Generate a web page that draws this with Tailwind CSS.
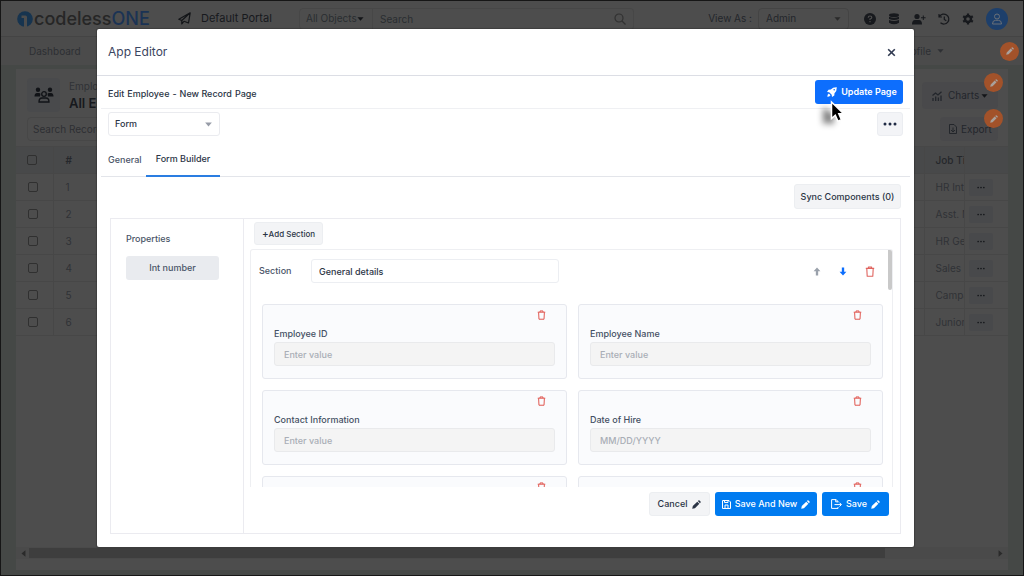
<!DOCTYPE html>
<html lang="en">
<head>
<meta charset="utf-8">
<meta name="viewport" content="width=device-width, initial-scale=1">
<title>App Editor</title>
<script src="https://cdn.jsdelivr.net/npm/@tailwindcss/browser@4"></script>
</head>
<body class="relative flex h-screen flex-col overflow-hidden border border-[#161616] bg-[#454846] font-['Inter',sans-serif] text-[10px] text-[#23262b]">

<!-- shared symbols -->
<svg class="hidden" aria-hidden="true">
  <symbol id="trash" viewBox="0 0 10 11"><path d="M.8 2.400h8.400M3.400 2.200V1h3.200v1.200M1.800 2.600l.4 7.600h5.600l.4-7.600" fill="none" stroke="currentColor" stroke-width="1.100" stroke-linejoin="round"/></symbol>
  <symbol id="pencil" viewBox="0 0 12 12"><path d="M.3 11.700l.8-3.600L7 2.200l2.800 2.800-5.900 5.900zM7.800 1.400l.8-.8q.7-.6 1.400 0l1.400 1.400q.6.7 0 1.400l-.8.8z" fill="currentColor"/></symbol>
  <symbol id="caret" viewBox="0 0 8 5"><path d="M.2.300h7.600L4 4.800z" fill="currentColor"/></symbol>
  <symbol id="arrow" viewBox="0 0 8 10"><path d="M4 .5L7.800 4.800H5.300V9.500H2.700V4.800H.2z" fill="currentColor"/></symbol>
  <symbol id="dots" viewBox="0 0 14 4"><circle cx="2" cy="2" r="1.500"/><circle cx="7" cy="2" r="1.500"/><circle cx="12" cy="2" r="1.500"/></symbol>
</svg>

<header class="flex h-9 shrink-0 items-center border-b border-[#444] bg-[#4d4d4d] pr-[15px] pl-4">
  <a href="#" class="flex w-[161px] items-center gap-px text-lg font-medium text-[#262626]">
    <svg class="h-4 w-4 shrink-0" viewBox="0 0 16 16"><circle cx="8" cy="8" r="7.800" fill="#17344f"/><path d="M4.500 4.500H8.500q1.500 0 1.500 1.500V16H7V7H4.500z" fill="#4d4d4d"/></svg>
    <span>codeless<span class="text-[#1b3354]">ONE</span></span>
  </a>
  <svg class="h-[13px] w-[13px]" viewBox="0 0 13 13" fill="none" stroke="#131518" stroke-width="1.200" stroke-linejoin="round"><path d="M12.200.8L.8 7.200l3 1.300L12.200.8 10.500 11 6 9.300M3.800 8.500V12l2-2.700"/></svg>
  <span class="ml-[10px] w-[98px] text-[11px] text-[#17191d]">Default Portal</span>
  <div class="relative w-[74px]">
    <select aria-label="Objects" class="h-[22px] w-full appearance-none rounded-l border border-[#474747] pl-[6px] text-[10px] text-[#2a2d31]"><option>All Objects</option></select>
    <svg class="absolute top-[9px] right-[9px] h-1 w-[7px] text-[#131518]"><use href="#caret"/></svg>
  </div>
  <div class="relative w-[261px]">
    <input aria-label="Search" placeholder="Search" class="h-[22px] w-full rounded-r border border-l-0 border-[#474747] pl-[7px] text-[10px] placeholder:text-[#2a2d31]">
    <svg class="absolute top-[5px] right-2 h-3 w-3" viewBox="0 0 12 12" fill="none" stroke="#313131" stroke-width="1.200"><circle cx="5" cy="5" r="4"/><path d="M8 8l3.500 3.500"/></svg>
  </div>
  <label for="view" class="mr-[6px] ml-auto text-[10px]">View As :</label>
  <div class="relative w-[91px]">
    <select id="view" class="h-[22px] w-full appearance-none rounded border border-[#444] pl-[7px] text-[10px]"><option>Admin</option></select>
    <svg class="absolute top-[9px] right-2 h-1 w-[7px] text-[#2a2a2a]"><use href="#caret"/></svg>
  </div>
  <nav class="ml-[15px] flex items-center gap-3 text-[#17191d]" aria-label="Tools">
    <button aria-label="Help"><svg class="h-3 w-3" viewBox="0 0 12 12"><circle cx="6" cy="6" r="6" fill="currentColor"/><path d="M4.200 4.700q0-1.700 1.800-1.700t1.800 1.500Q7.800 5.500 6 6v1M6 8v1.300" fill="none" stroke="#4d4d4d" stroke-width="1.200"/></svg></button>
    <button aria-label="Data"><svg class="h-3 w-3" viewBox="0 0 12 12" fill="currentColor"><ellipse cx="6" cy="2.200" rx="5" ry="1.900"/><path d="M1 3.700q5 2.200 10 0V6q-5 2.200-10 0zM1 7q5 2.200 10 0v2.800q-5 3-10 0z"/></svg></button>
    <button aria-label="Add user"><svg class="h-3 w-[14px]" viewBox="0 0 14 12" fill="currentColor"><circle cx="5" cy="3.500" r="2.600"/><path d="M0 11.500q0-4.500 3-4.500h4q3 0 3 4.500zM10.800 2.500h1v1.800h1.800v1h-1.800v1.800h-1V5.300H9v-1h1.800z"/></svg></button>
    <button aria-label="History"><svg class="h-3 w-3" viewBox="0 0 12 12" fill="none" stroke="currentColor" stroke-width="1.200"><path d="M1.500 3.500A5 5 0 1 1 2.500 9.800M1 1v3h3M6.300 3.500v3l2 1.300"/></svg></button>
    <button aria-label="Settings"><svg class="h-3 w-3" viewBox="0 0 12 12"><circle cx="6" cy="6" r="3" fill="none" stroke="currentColor" stroke-width="2.400"/><path d="M6 .4v2M6 9.600v2M1.200 3.200l1.600 1M9.200 7.800l1.600 1M1.200 8.800l1.600-1M9.200 4.200l1.600-1" stroke="currentColor" stroke-width="2.200"/></svg></button>
    <button aria-label="Account" class="flex h-[22px] w-[22px] items-center justify-center rounded-full bg-[#1d3f6b]"><svg class="h-3 w-3" viewBox="0 0 12 12" fill="none" stroke="#6a7078"><circle cx="6" cy="3.500" r="2.500"/><path d="M1.500 11q0-3.700 3-3.700h3q3 0 3 3.700z"/></svg></button>
  </nav>
</header>

<div class="flex h-7 shrink-0 items-center justify-between bg-[#4b4b4b] pl-7 text-[#2d2f33]">
  <a href="#">Dashboard</a>
  <div class="flex items-center pr-1">
    <a href="#" class="flex items-center gap-[6px]">Profile<svg class="h-1 w-[7px]"><use href="#caret"/></svg></a>
    <button aria-label="Edit navigation" class="ml-14 flex h-[19px] w-[19px] items-center justify-center rounded-full bg-[#a2522a] text-[#a9a19c]"><svg class="h-2 w-2"><use href="#pencil"/></svg></button>
  </div>
</div>

<main class="mx-[15px] mt-1 mb-[5px] flex min-h-0 grow flex-col bg-[#4d4d4d]">
  <div class="flex h-[43px] shrink-0 items-end justify-between pr-[10px] pl-[11px]">
    <div class="flex items-center gap-[9px]">
      <div class="flex h-[34px] w-[33px] items-center justify-center rounded bg-[#494a4c]">
        <svg class="h-4 w-5" viewBox="0 0 20 16" fill="#111317"><circle cx="4" cy="2.800" r="2.200"/><circle cx="16" cy="2.800" r="2.200"/><path d="M.5 9.500Q.5 6 3 6h2q1 0 1.500.7L6 9.500zM19.500 9.500Q19.500 6 17 6h-2q-1 0-1.500.7l.5 2.800z"/><g fill="none" stroke="#111317" stroke-width="1.300"><circle cx="10" cy="7" r="2.300"/><path d="M5 15q0-4 3-4h4q3 0 3 4z"/></g></svg>
      </div>
      <div><p class="leading-4 text-[#303236]">Employee</p><h1 class="text-[13px] leading-[18px] font-semibold text-[#17191d]">All Employees</h1></div>
    </div>
    <div class="relative mb-[3px]">
      <button class="flex h-[27px] w-[76px] items-center gap-[6px] rounded bg-[#49494b] pl-[10px] text-[10px]"><svg class="h-[10px] w-[10px]" viewBox="0 0 10 10" fill="none" stroke="currentColor" stroke-width="1.300"><path d="M1 10V7M3.700 10V5.500M6.400 10V6.500M9 10V4.500M.5 4.500L3.500 2l2.500 2L9.500.8"/></svg>Charts<svg class="-ml-1 h-1 w-[7px] text-[#131518]"><use href="#caret"/></svg></button>
      <button aria-label="Edit charts" class="absolute -top-[9px] right-[-5px] flex h-[19px] w-[19px] items-center justify-center rounded-full bg-[#a2522a] text-[#a9a19c]"><svg class="h-2 w-2"><use href="#pencil"/></svg></button>
    </div>
  </div>
  <div class="flex h-[34px] shrink-0 items-center justify-between pr-[10px] pl-[11px]">
    <input aria-label="Search Records" placeholder="Search Records" class="h-6 w-48 rounded border border-[#474747] pl-[5px] text-[10px] placeholder:text-[#2d2f33]">
    <div class="relative">
      <button class="flex h-6 w-[58px] items-center gap-1 rounded bg-[#49494b] pl-[9px] text-[10px]"><svg class="h-[10px] w-2" viewBox="0 0 8 10" fill="none" stroke="currentColor"><path d="M.5.5H5L7.500 3v6.500h-7zM4 3.500v4M2 6l2 2 2-2"/></svg>Export</button>
      <button aria-label="Edit export" class="absolute -top-2 right-[-5px] flex h-[19px] w-[19px] items-center justify-center rounded-full bg-[#a2522a] text-[#a9a19c]"><svg class="h-2 w-2"><use href="#pencil"/></svg></button>
    </div>
  </div>
  <table class="w-full table-fixed border-collapse text-left text-[#303236]">
    <colgroup><col class="w-[37px]"><col class="w-10"><col><col class="w-10"><col class="w-11"></colgroup>
    <thead>
      <tr class="h-[27px] border-y border-[#474747] bg-[#48494a] text-[#25272b]"><th class="pl-[11px]"><input type="checkbox" aria-label="Select all" class="block h-[10px] w-[10px] appearance-none rounded-xs border border-[#303030]"></th><th class="border-l border-[#474747] pl-3 font-semibold">#</th><th class="text-center">Name</th><th class="overflow-hidden border-l border-[#474747] pl-[11px] font-medium whitespace-nowrap">Job Title</th><th class="border-l border-[#474747]"></th></tr>
    </thead>
    <tbody id="rows"></tbody>
  </table>
  <div class="mt-auto mb-[11px] flex h-3 shrink-0 items-center justify-between bg-[#4a4a4a] px-1 text-[#2a2a2a]" aria-hidden="true">
    <svg class="h-[5px] w-[7px] rotate-90"><use href="#caret"/></svg>
    <div class="mr-auto ml-[2px] h-[10px] w-[87%] bg-[#3e3e3e]"></div>
    <svg class="h-[5px] w-[7px] -rotate-90"><use href="#caret"/></svg>
  </div>
</main>

<section role="dialog" aria-labelledby="dlg-title" class="absolute top-7 right-[109px] bottom-7 left-24 flex flex-col rounded-xs bg-white text-[9px] font-medium text-[#2b3445] shadow-[0_0_1px_1px_#0003]">
  <div class="flex h-[47px] shrink-0 items-center justify-between border-b border-[#dcdee5] pr-[18px] pl-[11px]">
    <h2 id="dlg-title" class="text-xs font-normal text-[#3b4560]">App Editor</h2>
    <button aria-label="Close"><svg class="h-[9px] w-[9px]" viewBox="0 0 9 9" stroke="#2f3950" stroke-width="1.600"><path d="M1.200 1.200l6.600 6.600M7.800 1.200L1.200 7.800"/></svg></button>
  </div>
  <div class="mx-1 flex h-[33px] shrink-0 items-center justify-between border-b border-[#eff0f3] pr-[7px] pl-[7px]">
    <p class="flex gap-[3px] pt-1"><span>Edit</span><span>Employee</span><span>-</span><span>New Record</span><span>Page</span></p>
    <button class="relative flex h-6 w-[88px] items-center justify-center gap-1 rounded-[3px] bg-[#0d6efd] pl-[6px] font-semibold text-white">
      <svg class="h-[10px] w-[10px]" viewBox="0 0 10 10" fill="#fff"><path d="M9.800.2Q10 4 7.500 6.200L7.300 8.500 5 10 4.700 7.800 2.200 5.300 0 5 1.500 2.700l2.300-.2Q6 0 9.800.2zM1.800 6.500L3.500 8.200Q2.500 9.700.3 9.700.3 7.500 1.800 6.500z"/><circle cx="7.200" cy="2.800" r=".8" fill="#0d6efd"/></svg>
      Update Page
    </button>
  </div>
  <div class="flex h-[30px] shrink-0 items-center justify-between px-[11px]">
    <div class="relative w-28">
      <select aria-label="Page type" class="h-6 w-full appearance-none rounded-[3px] border border-[#eaebef] pl-[6px]"><option>Form</option></select>
      <svg class="absolute top-[10px] right-2 h-[5px] w-[7px] text-[#979ca7]"><use href="#caret"/></svg>
    </div>
    <button aria-label="More" class="flex h-6 w-[26px] items-center justify-center rounded-[3px] border border-[#ebedf1] bg-[#f3f4f7]"><svg class="h-1 w-[14px] fill-[#1f2a44]"><use href="#dots"/></svg></button>
  </div>
  <div role="tablist" class="mx-1 flex h-[38px] shrink-0 border-b border-[#e3e5ea] pl-[7px]">
    <button role="tab" class="w-[38px] pt-1 text-left whitespace-nowrap text-[#4a5568]">General</button>
    <button role="tab" aria-selected="true" class="-mb-px w-[74px] border-b-2 border-[#2a7de1] pt-1">Form Builder</button>
  </div>
  <div class="flex h-[41px] shrink-0 items-center justify-end pr-[13px] pb-[2px]">
    <button class="h-[25px] w-[107px] rounded-[3px] border border-[#eceef1] bg-[#f3f4f6]">Sync Components (0)</button>
  </div>
  <div class="mr-[13px] mb-[13px] ml-[13px] flex min-h-0 grow border border-[#ebebf0]">
    <aside class="w-[133px] shrink-0 border-r border-[#ebebf0] px-[15px] pt-[13px] pr-6 text-[#4a5568]">
      <h3 class="mb-[10px] leading-[14px]">Properties</h3>
      <button class="h-6 w-full rounded-[3px] bg-[#e9ebef]">Int number</button>
    </aside>
    <div class="flex min-w-0 grow flex-col pr-[7px] pl-[6px]">
      <button class="mt-[3px] ml-1 h-[23px] w-[69px] shrink-0 rounded-[3px] border border-[#eceef1] bg-[#f3f4f6] text-[8px]"><span class="text-[10px]">+</span>Add Section</button>
      <div class="relative mt-1 min-h-0 grow overflow-hidden rounded-t-[3px] border border-b-0 border-[#eeeff2] px-[11px] pt-[9px]">
        <div class="absolute top-0 right-0 h-10 w-1 rounded-b bg-[#c9c9c9]"></div>
        <div class="flex items-center pr-[6px]">
          <label for="section" class="-ml-[3px] w-[52px] text-[#4a5568]">Section</label>
          <input id="section" value="General details" class="h-6 w-[248px] rounded-[3px] border border-[#eceef2] pl-[7px]">
          <div class="ml-auto flex items-center gap-[18px]">
            <button aria-label="Move up"><svg class="h-[9px] w-2 text-[#9aa1ab]"><use href="#arrow"/></svg></button>
            <button aria-label="Move down"><svg class="h-[9px] w-2 rotate-180 text-[#0d6efd]"><use href="#arrow"/></svg></button>
            <button aria-label="Delete section"><svg class="h-[11px] w-[10px] text-[#e0645f]"><use href="#trash"/></svg></button>
          </div>
        </div>
        <div id="cards" class="mt-[21px] mr-[-2px] grid grid-cols-2 gap-[11px]"></div>
      </div>
      <div class="mb-[17px] flex shrink-0 justify-end gap-[5px] pt-[5px] pr-1">
        <button class="flex h-6 w-[61px] items-center justify-center gap-[5px] rounded-[3px] border border-[#eceef1] bg-[#f3f4f6]">Cancel<svg class="h-[9px] w-[9px]"><use href="#pencil"/></svg></button>
        <button class="flex h-6 w-[102px] items-center justify-center gap-1 rounded-[3px] bg-[#007bf0] text-white"><svg class="h-[9px] w-[9px]" viewBox="0 0 9 9" fill="none" stroke="#fff"><path d="M.5.5H7L8.500 2v6.500h-8zM2.500.5v2h3.500v-2M3 8.300V5h3v3.300"/></svg>Save And New<svg class="h-[9px] w-[9px]"><use href="#pencil"/></svg></button>
        <button class="flex h-6 w-[67px] items-center justify-center gap-1 rounded-[3px] bg-[#007bf0] text-white"><svg class="h-[10px] w-[11px]" viewBox="0 0 11 10" fill="none" stroke="#fff"><path d="M7 3.300V2.500L5.200.6H.6v8.800H7V8M3.500 5.600h6.700M8.500 3.700l1.900 1.900-1.900 1.900M4.700.6v2.200H7"/></svg>Save<svg class="h-[9px] w-[9px]"><use href="#pencil"/></svg></button>
      </div>
    </div>
  </div>
</section>

<!-- pointer over the page -->
<svg class="pointer-events-none absolute top-[97px] left-[812px] h-10 w-9" viewBox="0 0 36 40" aria-hidden="true">
  <defs><filter id="soft" x="-60%" y="-60%" width="220%" height="220%"><feGaussianBlur stdDeviation="3"/></filter></defs>
  <path d="M10 9v18l5-3 3 3 3-2-1-6 3-1z" fill="#000" opacity=".5" filter="url(#soft)"/>
  <path d="M18.500 4v16.500l3.800-3.300 2.700 6 3.400-1.500-2.600-5.900h4.800z" fill="#000" stroke="#fff" stroke-width="1.500"/>
</svg>

<script>
  const jobs = ["HR Intern", "Asst. Manager", "HR Generalist", "Sales Lead", "Campaign Lead", "Junior Analyst"];
  document.getElementById("rows").innerHTML = jobs.map((job, i) => `
    <tr class="h-[27px] border-b border-[#474747]">
      <td class="pl-[12px]"><input type="checkbox" aria-label="Select row ${i + 1}" class="block h-[10px] w-[10px] appearance-none rounded-xs border border-[#303030]"></td>
      <td class="border-l border-[#474747] pl-3">${i + 1}</td><td></td>
      <td class="overflow-hidden border-l border-[#474747] pl-[11px] whitespace-nowrap">${job}</td>
      <td class="border-l border-[#474747] pl-1"><button aria-label="Row actions" class="flex h-[17px] w-6 items-center justify-center rounded-xs bg-[#48494b]"><svg class="h-[3px] w-2 fill-[#17191d]"><use href="#dots"/></svg></button></td>
    </tr>`).join("");
  const fields = [["Employee ID", "Enter value"], ["Employee Name", "Enter value"], ["Contact Information", "Enter value"], ["Date of Hire", "MM/DD/YYYY"], ["Department", "Enter value"], ["Job Title", "Enter value"]];
  document.getElementById("cards").innerHTML = fields.map(([name, hint], i) => `
    <div class="flex h-[75px] flex-col rounded-[3px] border border-[#e6e8ee] bg-[#fafbfd] px-[11px]">
      <button aria-label="Delete ${name}" class="mt-[5px] mr-[9px] self-end"><svg class="h-[10px] w-[9px] text-[#e0564f]"><use href="#trash"/></svg></button>
      <label for="f${i}" class="mt-[7px] mb-px leading-[14px] text-[#445063]">${name}</label>
      <input id="f${i}" placeholder="${hint}" class="h-6 w-full shrink-0 rounded-[3px] border border-[#e9eaec] bg-[#f4f4f4] pl-[9px] placeholder:text-[#a9aeb6]">
    </div>`).join("");
</script>
</body>
</html>
